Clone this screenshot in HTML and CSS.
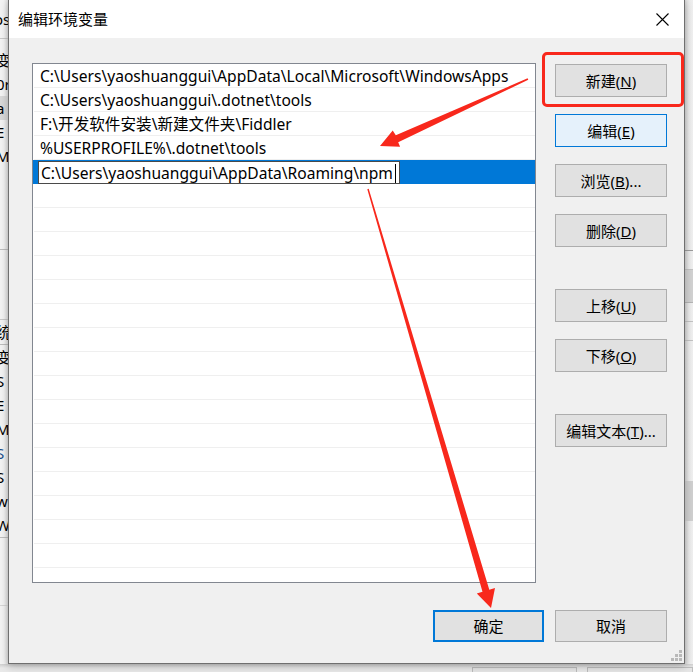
FILE: index.html
```html
<!DOCTYPE html>
<html lang="zh-CN">
  <head>
    <meta charset="UTF-8" />
    <meta name="viewport" content="width=device-width, initial-scale=1.0" />
    <title>编辑环境变量</title>
    <link rel="stylesheet" href="styles.css">
  </head>
  <body>
    <div class="screen">
      <div class="main-row">
        <!-- window behind the dialog, left edge -->
        <div class="behind behind-left">
          <div class="bl-head"><span class="frag">os</span></div>
          <div class="bl-line"><span class="frag">变</span></div>
          <div class="bl-line"><span class="frag">0r</span></div>
          <div class="bl-line bl-sel"><span class="frag">a</span></div>
          <div class="bl-line"><span class="frag">E</span></div>
          <div class="bl-line"><span class="frag">M</span></div>
          <div class="bl-gap"></div>
          <div class="bl-band"></div>
          <div class="bl-line bl-caption"><span class="frag">统</span></div>
          <div class="bl-line"><span class="frag">变</span></div>
          <div class="bl-line"><span class="frag">S</span></div>
          <div class="bl-line"><span class="frag">E</span></div>
          <div class="bl-line"><span class="frag">M</span></div>
          <div class="bl-line"><span class="frag blue">S</span></div>
          <div class="bl-line"><span class="frag">S</span></div>
          <div class="bl-line"><span class="frag">wi</span></div>
          <div class="bl-line"><span class="frag">W</span></div>
          <div class="bl-foot"></div>
        </div>

        <div class="dialog">
          <div class="titlebar">
            <span class="title">编辑环境变量</span>
            <span class="close">
              <svg width="13" height="13" viewBox="0 0 13 13">
                <path d="M0.5 0.5 L12.5 12.5 M12.5 0.5 L0.5 12.5" stroke="#000" stroke-width="1.1" fill="none" />
              </svg>
            </span>
          </div>

          <div class="content">
            <div class="list">
              <div class="row">C:\Users\yaoshuanggui\AppData\Local\Microsoft\WindowsApps</div>
              <div class="row">C:\Users\yaoshuanggui\.dotnet\tools</div>
              <div class="row">F:\开发软件安装\新建文件夹\Fiddler</div>
              <div class="row">%USERPROFILE%\.dotnet\tools</div>
              <div class="row row-editing">
                <span class="editbox"><span class="edit-text">C:\Users\yaoshuanggui\AppData\Roaming\npm</span><span class="caret"></span></span>
              </div>
              <div class="row"></div>
              <div class="row"></div>
              <div class="row"></div>
              <div class="row"></div>
              <div class="row"></div>
              <div class="row"></div>
              <div class="row"></div>
              <div class="row"></div>
              <div class="row"></div>
              <div class="row"></div>
              <div class="row"></div>
              <div class="row"></div>
              <div class="row"></div>
              <div class="row"></div>
              <div class="row"></div>
              <div class="row"></div>
              <div class="row"></div>
            </div>

            <div class="side">
              <button class="btn">新建(<u>N</u>)</button>
              <button class="btn btn-hover">编辑(<u>E</u>)</button>
              <button class="btn">浏览(<u>B</u>)...</button>
              <button class="btn">删除(<u>D</u>)</button>
              <button class="btn btn-group">上移(<u>U</u>)</button>
              <button class="btn">下移(<u>O</u>)</button>
              <button class="btn btn-group">编辑文本(<u>T</u>)...</button>
            </div>
          </div>

          <div class="footer">
            <button class="btn btn-default">确定</button>
            <button class="btn">取消</button>
          </div>

          <svg class="grip" width="12" height="12" viewBox="0 0 12 12">
            <rect x="8" y="0" width="3" height="3" fill="#b9b9b9" />
            <rect x="4" y="4" width="3" height="3" fill="#b9b9b9" />
            <rect x="8" y="4" width="3" height="3" fill="#b9b9b9" />
            <rect x="0" y="8" width="3" height="3" fill="#b9b9b9" />
            <rect x="4" y="8" width="3" height="3" fill="#b9b9b9" />
            <rect x="8" y="8" width="3" height="3" fill="#b9b9b9" />
          </svg>
        </div>

        <!-- window behind the dialog, right edge -->
        <div class="behind behind-right">
          <div class="br-top"></div>
          <div class="br-line"></div>
          <div class="br-block"></div>
          <div class="br-line"></div>
          <div class="br-line"></div>
          <div class="br-scroll"></div>
        </div>
      </div>

      <div class="behind-bottom">
        <span class="bb-btn"></span>
        <span class="bb-btn bb-wide"></span>
      </div>

      <!-- annotations drawn over the screenshot -->
      <div class="mark-box"></div>
      <svg class="arrows" width="693" height="672" viewBox="0 0 693 672">
        <polygon fill="#f8281c" points="528.3,79.7 398.2,142.3 400.1,146.8 380,146 392.7,130.4 395.8,135.3 527.6,78.3" />
        <polygon fill="#f8281c" points="367.3,189.2 482.5,591.7 476.8,593.4 491,608 495,588 489.3,589.7 368.7,188.8" />
      </svg>
    </div>
  </body>
</html>
```

FILE: styles.css
```css
html,
body {
  margin: 0;
  padding: 0;
}
body {
  width: 693px;
  height: 672px;
  overflow: hidden;
  background: #e9e9e9;
  font-family: "Noto Sans", "Noto Sans CJK SC", sans-serif;
  font-size: 15px;
  color: #000;
}
.screen {
  position: relative;
  width: 693px;
  height: 672px;
  display: flex;
  flex-direction: column;
}
.main-row {
  display: flex;
  height: 664px;
}

/* background window fragments */
.behind {
  width: 8px;
  overflow: hidden;
  display: flex;
  flex-direction: column;
  background: #f0f0f0;
}
.behind-left {
  background: linear-gradient(to right, #f3f3f3 0, #f3f3f3 4px, #dedede 8px);
}
.frag {
  display: block;
  white-space: nowrap;
  margin-left: -4px;
  line-height: 24px;
}
.frag.blue {
  color: #1a4f8a;
}
.bl-head {
  height: 38px;
  border-bottom: 1px solid #c8c8c8;
  display: flex;
  align-items: center;
}
.bl-head .frag {
  margin-left: -6px;
}
.bl-line {
  height: 24px;
  flex: none;
}
.bl-line:nth-child(2) {
  margin-top: 9px;
}
.bl-sel {
  background: #d9d9d9;
}
.bl-gap {
  height: 81px;
  border-bottom: 1px solid #bdbdbd;
  flex: none;
}
.bl-band {
  height: 69px;
  border-bottom: 1px solid #c8c8c8;
  flex: none;
}
.bl-caption {
  border-bottom: 1px solid #bdbdbd;
}
.bl-foot {
  height: 67px;
  border-top: 1px solid #bdbdbd;
  border-bottom: 1px solid #d6d6d6;
  flex: none;
}
.behind-right {
  background: linear-gradient(to right, #d7d7d7 0, #ececec 4px, #f0f0f0 8px);
}
.br-top {
  height: 250px;
  border-bottom: 1px solid #9c9c9c;
  flex: none;
}
.br-line {
  height: 18px;
  border-bottom: 1px solid #c3c3c3;
  flex: none;
}
.br-block {
  height: 32px;
  background: #d2d2d2;
  border-bottom: 1px solid #b5b5b5;
  flex: none;
}
.br-scroll {
  margin-top: 140px;
  height: 40px;
  background: #d0d0d0;
  flex: none;
}

.behind-bottom {
  height: 8px;
  display: flex;
  padding-left: 472px;
  gap: 10px;
  background: linear-gradient(to bottom, #cfcfcf 0, #e9e9e9 4px);
}
.bb-btn {
  margin-top: 3px;
  width: 109px;
  border: 1px solid #bdbdbd;
  border-bottom: none;
  background: #e6e6e6;
}
.bb-wide {
  width: 110px;
}

/* dialog */
.dialog {
  position: relative;
  width: 677px;
  height: 664px;
  box-sizing: border-box;
  border: 1px solid #6f6f6f;
  border-top: none;
  background: #f0f0f0;
  box-shadow: 0 2px 8px rgba(0, 0, 0, 0.25);
  display: flex;
  flex-direction: column;
}
.titlebar {
  height: 38px;
  background: #fff;
  display: flex;
  align-items: center;
  justify-content: space-between;
  flex: none;
}
.title {
  padding-left: 9px;
  padding-bottom: 1px;
}
.close {
  width: 42px;
  display: flex;
  justify-content: center;
  padding-right: 1px;
}
.close svg {
  display: block;
}
.content {
  display: flex;
  padding: 25px 17px 0 23px;
  gap: 19px;
}
.list {
  width: 504px;
  height: 520px;
  box-sizing: border-box;
  border: 1px solid #828790;
  background: #fff;
  overflow: hidden;
  flex: none;
  font-size: 15.6px;
}
.row {
  height: 24px;
  box-sizing: border-box;
  border-bottom: 1px solid #efefef;
  margin-left: 1px;
  padding-left: 6px;
  padding-top: 2px;
  line-height: 21px;
  white-space: nowrap;
}
.row-editing {
  background: #0078d7;
  margin-left: 0;
  padding-left: 5px;
  border-bottom: none;
  padding-top: 1px;
}
.editbox {
  display: flex;
  align-items: center;
  width: 362px;
  height: 23px;
  box-sizing: border-box;
  border: 1px solid #4a4a4a;
  background: #fff;
  padding-left: 2px;
  padding-top: 1px;
}
.edit-text {
  line-height: 21px;
}
.caret {
  width: 1px;
  height: 19px;
  background: #000;
  margin-left: 2px;
  flex: none;
}
.side {
  display: flex;
  flex-direction: column;
  gap: 17px;
  padding-top: 1px;
}
.btn {
  width: 112px;
  height: 33px;
  box-sizing: border-box;
  border: 1px solid #adadad;
  background: #e1e1e1;
  font-family: inherit;
  font-size: 15px;
  color: #000;
  padding: 0 0 1px;
  margin: 0;
}
.btn-hover {
  background: #e5f1fb;
  border-color: #0078d7;
}
.btn-group {
  margin-top: 25px;
}
.footer {
  display: flex;
  justify-content: flex-end;
  gap: 11px;
  padding: 27px 17px 0 0;
}
.footer .btn {
  height: 32px;
}
.btn-default {
  width: 111px;
  border: 2px solid #0078d7;
}
.grip {
  position: absolute;
  right: 1px;
  bottom: 1px;
}

/* red annotation overlays */
.mark-box {
  position: absolute;
  left: 542px;
  top: 52px;
  width: 142px;
  height: 55px;
  box-sizing: border-box;
  border: 3px solid #f8281c;
  border-radius: 5px;
}
.arrows {
  position: absolute;
  left: 0;
  top: 0;
  pointer-events: none;
}
```
